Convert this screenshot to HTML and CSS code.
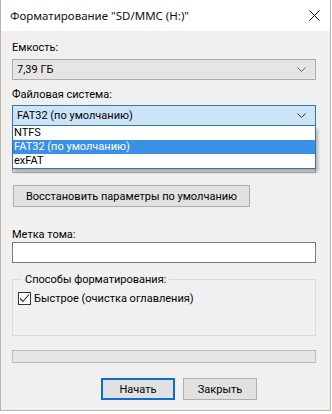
FILE: index.html
```html
<!DOCTYPE html>
<html lang="ru">
<head>
    <meta charset="UTF-8">
    <meta name="viewport" content="width=device-width, initial-scale=1.0">
    <title>Форматирование</title>
    <link rel="stylesheet" href="styles.css">
</head>
<body>
    <div class="window">
        <div class="titlebar">
            <span class="title">Форматирование "SD/MMC (H:)"</span>
            <svg class="close" width="11" height="11" viewBox="0 0 11 11">
                <path d="M0.5 0.5 L10.5 10.5 M10.5 0.5 L0.5 10.5" stroke="#111" stroke-width="1" fill="none"/>
            </svg>
        </div>

        <div class="content">
            <div class="label first">Емкость:</div>
            <div class="combo">
                <span>7,39 ГБ</span>
                <svg class="chev" width="9" height="5" viewBox="0 0 9 5"><path d="M0.5 0.5 L4.5 4.5 L8.5 0.5" stroke="#666" fill="none"/></svg>
            </div>

            <div class="label second">Файловая система:</div>
            <div class="combo-wrap">
                <div class="combo focused">
                    <span>FAT32 (по умолчанию)</span>
                    <svg class="chev" width="9" height="5" viewBox="0 0 9 5"><path d="M0.5 0.5 L4.5 4.5 L8.5 0.5" stroke="#333" fill="none"/></svg>
                </div>
                <ul class="dropdown">
                    <li>NTFS</li>
                    <li class="selected">FAT32 (по умолчанию)</li>
                    <li>exFAT</li>
                </ul>
            </div>

            <!-- размер кластера: закрыт выпадающим списком -->
            <div class="label spacer"></div>
            <div class="combo under"></div>

            <div class="btn wide">Восстановить параметры по умолчанию</div>

            <div class="label volume">Метка тома:</div>
            <div class="input"></div>

            <fieldset class="group">
                <legend>Способы форматирования:</legend>
                <label class="check">
                    <span class="box">
                        <svg width="11" height="11" viewBox="0 0 11 11"><path d="M1 5.5 L4 8.5 L10 1.5" stroke="#222" stroke-width="1.1" fill="none"/></svg>
                    </span>
                    Быстрое (очистка оглавления)
                </label>
            </fieldset>

            <div class="progress"></div>

            <div class="actions">
                <div class="btn primary">Начать</div>
                <div class="btn">Закрыть</div>
            </div>
        </div>
    </div>
</body>
</html>
```

FILE: styles.css
```css
body {
    margin: 0;
    background: #fff;
    font-family: Roboto, "Noto Sans", sans-serif;
    font-size: 11px;
    color: #000;
}

.window {
    width: 331px;
    height: 411px;
    box-sizing: border-box;
    border: 1px solid #bdb3a4;
    border-top: none;
    background: #f0f0f0;
    display: flex;
    flex-direction: column;
}

.titlebar {
    height: 31px;
    background: #fff;
    display: flex;
    align-items: center;
    justify-content: space-between;
    padding: 0 10px 0 9px;
    flex-shrink: 0;

    .title {
        font-family: "Noto Sans", sans-serif;
        font-size: 11.5px;
        color: #111;
        white-space: nowrap;
    }
}

.content {
    padding: 9px 14px 0 11px;
    display: flex;
    flex-direction: column;
}

.label {
    line-height: 15px;
    height: 15px;
    white-space: nowrap;

    &.first {
        margin-bottom: 4px;
    }

    &.second {
        margin-bottom: 3px;
    }

    &.spacer {
        margin-bottom: 3px;
    }

    &.volume {
        margin-top: 20px;
    }
}

.combo {
    height: 21px;
    box-sizing: border-box;
    border: 1px solid #adadad;
    background: #e5e5e5;
    display: flex;
    align-items: center;
    justify-content: space-between;
    padding: 0 9px 0 4px;
    margin-bottom: 7px;
    white-space: nowrap;

    &.focused {
        background: #cce4f7;
        border-color: #2f74b5;
        margin-bottom: 8px;
    }

    &.under {
        margin-bottom: 0;
    }
}

.combo-wrap {
    position: relative;

    .dropdown {
        position: absolute;
        left: 0;
        right: 0;
        top: 21px;
        list-style: none;
        margin: 0;
        padding: 0;
        background: #fff;
        border: 1px solid #3a6fa8;
        border-top: none;
        box-shadow: 2px 3px 3px rgba(0, 0, 0, 0.25);
        z-index: 2;

        li {
            height: 14px;
            line-height: 14px;
            padding-left: 1px;
        }

        .selected {
            background: #3a8fe6;
            color: #fff;
        }
    }
}

.btn {
    height: 22px;
    box-sizing: border-box;
    border: 1px solid #adadad;
    background: #e1e1e1;
    display: flex;
    align-items: center;
    justify-content: center;
    white-space: nowrap;

    &.wide {
        width: 237px;
        margin: 12px 0 0 1px;
    }

    &.primary {
        border: 2px solid #0a6fcf;
    }
}

.input {
    height: 21px;
    box-sizing: border-box;
    border: 1px solid #7a7a7a;
    background: #fff;
    margin-bottom: 9px;
}

.group {
    margin: 0;
    padding: 5px 6px 0 5px;
    border: 1px solid #dcdcdc;
    height: 64px;
    box-sizing: border-box;

    legend {
        padding: 0 3px;
        margin-left: 4px;
        line-height: 15px;
    }

    .check {
        display: flex;
        align-items: center;
        gap: 3px;
    }

    .box {
        width: 13px;
        height: 13px;
        box-sizing: border-box;
        border: 1px solid #333;
        background: #fff;
        display: flex;
        align-items: center;
        justify-content: center;
    }
}

.progress {
    height: 13px;
    box-sizing: border-box;
    border: 1px solid #bcbcbc;
    background: #e6e6e6;
    margin-top: 14px;
}

.actions {
    display: flex;
    gap: 8px;
    margin-top: 15px;
    padding-left: 89px;

    .btn {
        width: 74px;
    }
}
```
